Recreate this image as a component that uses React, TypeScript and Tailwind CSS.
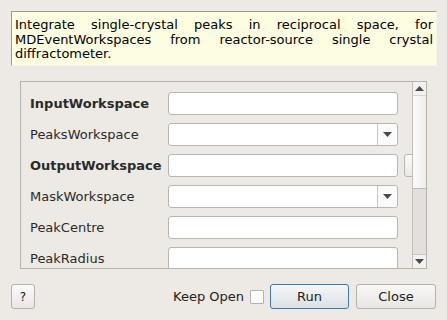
const rows: { label: string; bold?: boolean; combo?: boolean; extra?: boolean }[] = [
  { label: "InputWorkspace", bold: true },
  { label: "PeaksWorkspace", combo: true },
  { label: "OutputWorkspace", bold: true, extra: true },
  { label: "MaskWorkspace", combo: true },
  { label: "PeakCentre" },
  { label: "PeakRadius" },
];

const Arrow = ({ up }: { up?: boolean }) => (
  <svg width="9" height="5" viewBox="0 0 9 5">
    <path d={up ? "M0 5 L4.5 0 L9 5 Z" : "M0 0 L9 0 L4.5 5 Z"} fill="#4a4a4a" />
  </svg>
);

const Row = ({ label, bold, combo, extra }: (typeof rows)[number]) => (
  <div className="flex items-center h-[23px] shrink-0">
    <div className={`w-[138px] shrink-0 text-[#2a2a2a] ${bold ? "font-bold" : ""}`}>{label}</div>
    <div className="w-[230px] h-[23px] shrink-0 flex bg-white border border-[#b9b5b0] rounded-[3px]">
      <div className="flex-1" />
      {combo && (
        <div className="w-[20px] border-l border-[#c9c5c1] flex items-center justify-center bg-[#fafafa] rounded-r-[3px]">
          <Arrow />
        </div>
      )}
    </div>
    {extra && (
      <div className="ml-[6px] w-[24px] h-[23px] shrink-0 border border-[#b9b5b0] rounded-[3px] bg-gradient-to-b from-[#fbfaf9] to-[#ebe9e6]" />
    )}
  </div>
);

export default function App() {
  return (
    <div
      className="w-[447px] h-[320px] bg-[#edeae6] text-[13px] text-[#1e1e1e] overflow-hidden flex flex-col"
      style={{ fontFamily: '"DejaVu Sans", sans-serif' }}
    >
      <div className="ml-[11px] mt-[11px] w-[426px] h-[55px] shrink-0 bg-[#fdfde1] border-t border-l border-[#9c9a96] border-r border-b border-r-[#f4f4ee] border-b-[#f4f4ee] pl-[3px] pr-[3px] pt-[6px] leading-[14.5px] text-justify text-black">
        Integrate single-crystal peaks in reciprocal space, for MDEventWorkspaces from reactor-source single crystal diffractometer.
      </div>

      <div className="ml-[20px] mt-[15px] w-[407px] h-[188px] shrink-0 border border-[#b6b2ad] flex">
        <div className="flex-1 overflow-hidden pl-[9px] pt-[10px] flex flex-col gap-[8px]">
          {rows.map((r) => (
            <Row key={r.label} {...r} />
          ))}
        </div>
        <div className="w-[14px] shrink-0 border-l border-[#c3bfbb] flex flex-col">
          <div className="h-[14px] flex items-center justify-center bg-[#f3f2f0] border-b border-[#d6d3cf]">
            <Arrow up />
          </div>
          <div className="h-[93px] bg-gradient-to-r from-[#fbfbfa] to-[#efeeec] border-b border-[#bdb9b4]" />
          <div className="flex-1 bg-[#e2dfdc]" />
          <div className="h-[14px] flex items-center justify-center bg-[#f3f2f0] border-t border-[#c9c5c1]">
            <Arrow />
          </div>
        </div>
      </div>

      <div className="mt-[15px] h-[25px] flex items-center pl-[11px] pr-[11px]">
        <button className="w-[24px] h-[25px] border border-[#b5b2ae] rounded-[3px] bg-gradient-to-b from-[#fafaf9] to-[#e9e7e4] text-[12px] text-[#222]">
          ?
        </button>
        <div className="ml-auto flex items-center">
          <span className="text-[#222]">Keep Open</span>
          <div className="ml-[6px] w-[14px] h-[14px] bg-white border border-[#b5b2ae] rounded-[1px]" />
          <button className="ml-[6px] w-[79px] h-[25px] border border-[#3c7aab] rounded-[3px] bg-gradient-to-b from-[#f5f6f7] to-[#dde1e5] text-[#222]">
            Run
          </button>
          <button className="ml-[7px] w-[80px] h-[25px] border border-[#b5b2ae] rounded-[3px] bg-gradient-to-b from-[#f9f8f7] to-[#e8e6e3] text-[#222]">
            Close
          </button>
        </div>
      </div>
    </div>
  );
}
